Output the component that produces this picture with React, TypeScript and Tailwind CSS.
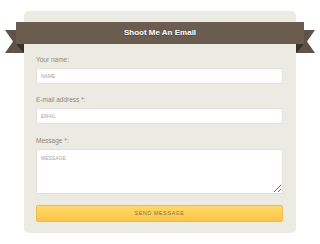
import React from "react";

export default function App() {
  return (
    <div className="w-[320px] h-[244px] bg-white pt-[11px] pl-[24px] font-['Liberation_Sans',Arial,sans-serif]">
      <div className="w-[272px] h-[222px] bg-[#ebeae3] rounded-[5px] pt-[11px] px-[12px]">
        {/* Ribbon */}
        <div className="relative -mx-[20px] h-[22px]">
          <svg className="absolute left-[-11px] top-[8px]" width="19" height="23" viewBox="0 0 19 23">
            <polygon points="0,0 19,0 19,23 0,23 8,11.5" fill="#5f5246" />
            <polygon points="11,14 19,14 19,23" fill="#3b3128" />
          </svg>
          <svg className="absolute right-[-11px] top-[8px]" width="19" height="23" viewBox="0 0 19 23">
            <polygon points="0,0 19,0 11,11.5 19,23 0,23" fill="#5f5246" />
            <polygon points="0,14 8,14 0,23" fill="#3b3128" />
          </svg>
          <div className="relative h-full bg-[#6a5d50] flex items-center justify-center">
            <span className="text-white font-bold text-[8px] [text-shadow:0_1px_0_rgba(0,0,0,0.3)]">
              Shoot Me An Email
            </span>
          </div>
        </div>

        <form className="flex flex-col mt-[11px] w-[247px]">
          <label className="text-[6.5px] leading-[10px] text-[#938877] mb-[3px]">Your name:</label>
          <input
            placeholder="NAME"
            className="h-[16px] bg-white rounded-[2px] border border-[#e2e0d8] px-[4px] text-[5px] placeholder:text-[#aaa69e] outline-none"
          />
          <label className="text-[6.5px] leading-[10px] text-[#938877] mt-[11px] mb-[3px]">E-mail address *:</label>
          <input
            placeholder="EMAIL"
            className="h-[16px] bg-white rounded-[2px] border border-[#e2e0d8] px-[4px] text-[5px] placeholder:text-[#aaa69e] outline-none"
          />
          <label className="text-[6.5px] leading-[10px] text-[#938877] mt-[12px] mb-[3px]">Message *:</label>
          <textarea
            placeholder="MESSAGE"
            className="h-[45px] bg-white rounded-[2px] border border-[#e2e0d8] px-[4px] py-[5px] text-[5px] placeholder:text-[#aaa69e] outline-none"
          />
          <button
            type="button"
            className="mt-[11px] h-[17px] rounded-[2px] border border-[#ebbd4f] bg-gradient-to-b from-[#ffd968] to-[#fcc545] text-[5.5px] tracking-[0.5px] text-[#7f7158]"
          >
            SEND MESSAGE
          </button>
        </form>
      </div>
    </div>
  );
}
